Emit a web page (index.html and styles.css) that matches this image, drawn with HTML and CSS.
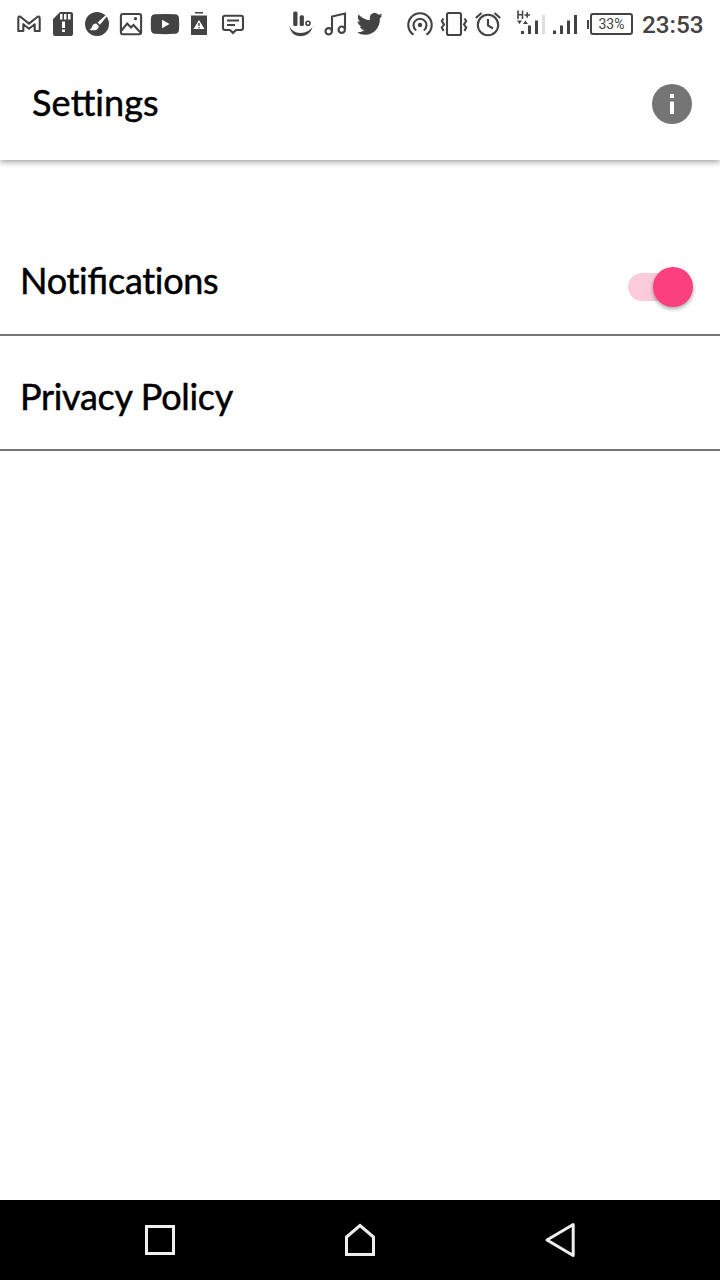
FILE: index.html
```html
<!DOCTYPE html>
<html lang="en">
<head>
<meta charset="utf-8">
<title>Settings</title>
<link rel="stylesheet" href="styles.css">
</head>
<body>
<div class="status">
  <div class="icons left">
    <svg viewBox="12 0 34 48"><path d="M18.300 31V18.200Q18.300 15.700 20.400 16.800L29 23.600L37.600 16.800Q39.700 15.700 39.700 18.200V31H34.700V24.200L29 28.700L23.300 24.200V31Z" class="s2" stroke-linejoin="round"/></svg>
    <svg viewBox="46 0 34 48"><path fill-rule="evenodd" d="M60 12H71Q73 12 73 14V34Q73 36 71 36H55Q53 36 53 34V19ZM60 14V19.500H62.500V14ZM64 14V19.500H66.500V14ZM68 14V19.500H70.500V14ZM62 21.500V28H65V21.500ZM62 29.500V32H65V29.500Z"/></svg>
    <svg viewBox="80 0 34 48"><circle cx="97" cy="24" r="12"/><path d="M97.500 22.500L106.500 14.500L107.500 15.500L100 24.800Z" fill="#fff"/><path d="M96.300 23.500L98.800 26Q98.500 30 94.500 30.300Q91.500 30.600 89.500 29.500Q91.800 28.500 92.300 26.300Q93 23.500 96.300 23.500Z" fill="#fff"/></svg>
    <svg viewBox="114 0 34 48"><rect x="120.900" y="14" width="20.200" height="20.200" rx="2" class="s2"/><path d="M121.500 30.500L127.200 23.500L131 27.500L133.500 25L140.500 32.500" class="s2"/><circle cx="135.500" cy="18.700" r="1.600"/></svg>
    <svg viewBox="148 0 34 48"><path d="M155 14.300Q165 13.500 175 14.300Q178.700 14.600 179 18Q179.400 24 179 30Q178.700 33.400 175 33.800Q165 34.500 155 33.800Q151.300 33.400 151 30Q150.600 24 151 18Q151.300 14.600 155 14.300Z"/><path d="M162 19.700V28.300L169.500 24Z" fill="#fff"/></svg>
    <svg viewBox="182 0 34 48"><path d="M195 12H203V13.500H195ZM191 15.500H207V35H191Z"/><path d="M199 20L204.500 29H193.500Z" fill="#fff"/><path d="M198.300 23H199.700V26H198.300ZM198.300 27H199.700V28.200H198.300Z"/></svg>
    <svg viewBox="216 0 34 48"><path d="M225 15.700H241Q243 15.700 243 17.700V28Q243 30 241 30H236L233 33L230 30H225Q223 30 223 28V17.700Q223 15.700 225 15.700ZM227 20.500H239M227 25H235" class="s2"/></svg>
  </div>
  <div class="icons mid">
    <svg viewBox="284 0 34 48"><rect x="293.200" y="11.500" width="4.300" height="14.500" rx="1.500"/><rect x="299.700" y="15.300" width="4.200" height="10.700" rx="1.500"/><circle cx="308" cy="23.300" r="2" class="s1"/><path d="M289.300 26Q292 32.500 300.500 33Q308.500 33 312.800 26.500Q310 36 300.500 36.300Q291 36 289.300 26Z"/></svg>
    <svg viewBox="318 0 34 48"><path d="M332 31V16.500L345 13.500V29.500" class="s2"/><circle cx="328.700" cy="31.300" r="3.200" class="s2"/><circle cx="341.700" cy="29.700" r="3.200" class="s2"/></svg>
    <svg viewBox="352 0 34 48"><path d="M382.500 15.300Q381.500 17 379.900 18.200C380.200 27.500 374 34.700 365.300 34.700Q360.500 34.700 357 32.200Q361.500 32.500 364.500 30Q361 29.600 359.800 26.500H362Q358 25 357.500 21.200L360 21.800Q356.700 18.500 358.500 14.500Q363.500 19.700 370 20.200C368.500 12.500 375.500 11.300 378.700 14.800L382 13.500Q381.300 15.200 380 16Z"/></svg>
  </div>
  <div class="icons right">
    <svg viewBox="403 0 34 48"><circle cx="420" cy="25" r="2.200"/><path d="M416.200 30.500A6.500 6.500 0 1 1 423.800 30.500M413.500 34.700A11.700 11.700 0 1 1 426.500 34.700" class="s2"/></svg>
    <svg viewBox="437 0 34 48"><rect x="447" y="13" width="14" height="22" rx="1.800" class="s2"/><path d="M443.500 18.500L441.800 21L444 24.500L441.800 27.500L443.500 31M464.500 18.500L466.200 21L464 24.500L466.200 27.500L464.500 31" class="s2"/></svg>
    <svg viewBox="471 0 34 48"><circle cx="488" cy="25" r="10.200" class="s2"/><path d="M488 19V25.500L493 28.500M475.800 18L481.500 13M500.200 18L494.500 13" class="s2"/></svg>
  </div>
  <svg class="net" viewBox="514 0 34 48"><path d="M518 10.500V19M522.500 10.500V19M518 14.800H522.500M524.500 15H530M527.200 12.300V17.700" class="s1"/><path d="M517 20.500H522L519.500 24ZM523 24H528L525.500 20.500ZM521 31H524V34H521ZM528 25.500H531V34H528ZM535 20.500H538V34H535Z"/><path d="M542 15H545V34H542Z" fill="#ddd"/></svg>
  <svg class="sig" viewBox="550 0 30 48"><path d="M553 30.500H556V34H553ZM560 25.500H563V34H560ZM567 20.500H570V34H567ZM574 15H577V34H574Z"/></svg>
  <div class="battery"><span>33%</span></div>
  <div class="time">23:53</div>
</div>
<header class="bar">
  <h1>Se<span class="lig">tt</span>ings</h1>
  <svg class="info" viewBox="0 0 40 40"><circle cx="20" cy="20" r="20"/><path d="M18 10H22V14H18ZM18 17.500H22V30H18Z" fill="#fff"/></svg>
</header>
<main>
  <div class="row first"><p>Noti<span class="lig">fi</span>cations</p><div class="toggle"><i></i></div></div>
  <div class="row second"><p>Privacy Policy</p></div>
</main>
<nav>
  <svg viewBox="0 0 40 40"><rect x="6.500" y="6.500" width="27" height="27"/></svg>
  <svg viewBox="0 0 40 40"><path d="M6.500 34.500V17L20 5.500L33.500 17V34.500Z"/></svg>
  <svg viewBox="0 0 40 40"><path d="M33.200 4.500V35.500L7 20Z" stroke-linejoin="round"/></svg>
</nav>
</body>
</html>
```
FILE: styles.css
```css
* { box-sizing: border-box; }
body {
  margin: 0;
  width: 720px;
  height: 1280px;
  display: flex;
  flex-direction: column;
  overflow: hidden;
  background: #fff;
  color: #000;
  font-family: Lato, "Open Sans", sans-serif;
}
svg { display: block; flex: none; }
.status { position: relative; z-index: 1; display: flex; height: 48px; flex: none; padding-left: 12px; background: #fff; fill: #434343; }
.icons { display: flex; }
.icons svg { width: 34px; height: 48px; }
.mid { margin-left: 34px; }
.right { margin-left: 17px; }
.s1, .s2 { fill: none; stroke: #434343; stroke-width: 1.6; }
.s2 { stroke-width: 2.1; }
.net { width: 34px; height: 48px; margin-left: 9px; }
.sig { width: 30px; height: 48px; margin-left: 2px; }
.battery { display: flex; align-items: center; margin: 13px 0 0 7px; width: 46px; height: 22px; }
.battery::before { content: ""; width: 2px; height: 9px; background: #434343; margin-right: 1px; }
.battery span {
  width: 43px;
  height: 22px;
  border: 2px solid #434343;
  border-radius: 3px;
  color: #434343;
  font: 14px/19px Roboto, sans-serif;
  text-align: center;
}
.time { margin-left: 9px; color: #434343; font: 500 24.3px/50px Roboto, sans-serif; white-space: nowrap; }
.bar {
  display: flex;
  align-items: center;
  justify-content: space-between;
  flex: none;
  height: 112px;
  padding: 0 28px 0 32px;
  box-shadow: 0 2px 6px rgba(0, 0, 0, .38);
}
h1, .row p {
  margin: 0;
  font-size: 36px;
  font-weight: 400;
  line-height: 44px;
  letter-spacing: -.3px;
  -webkit-text-stroke: .5px #000;
  white-space: nowrap;
}
h1 { margin-top: -4px; letter-spacing: .1px; }
.lig { letter-spacing: 0; }
.info { width: 40px; height: 40px; fill: #757575; }
main { flex: 1; padding-top: 68px; }
.row { display: flex; justify-content: space-between; padding: 0 27px 0 20px; border-bottom: 2px solid #757575; }
.first { height: 108px; padding-top: 30px; }
.second { height: 115px; padding-top: 38px; }
.toggle { width: 65px; height: 28px; margin-top: 15px; border-radius: 14px; background: linear-gradient(#fccbdc, #fccbdc) left / 50px 28px no-repeat; display: flex; justify-content: flex-end; align-items: center; }
.toggle i { width: 40px; height: 40px; flex: none; border-radius: 50%; background: #fc407f; box-shadow: 0 2px 4px rgba(0, 0, 0, .35); }
nav { display: flex; height: 80px; flex: none; align-items: center; justify-content: center; gap: 160px; background: #000; }
nav svg { width: 40px; height: 40px; fill: none; stroke: #eee; stroke-width: 3; }
```
